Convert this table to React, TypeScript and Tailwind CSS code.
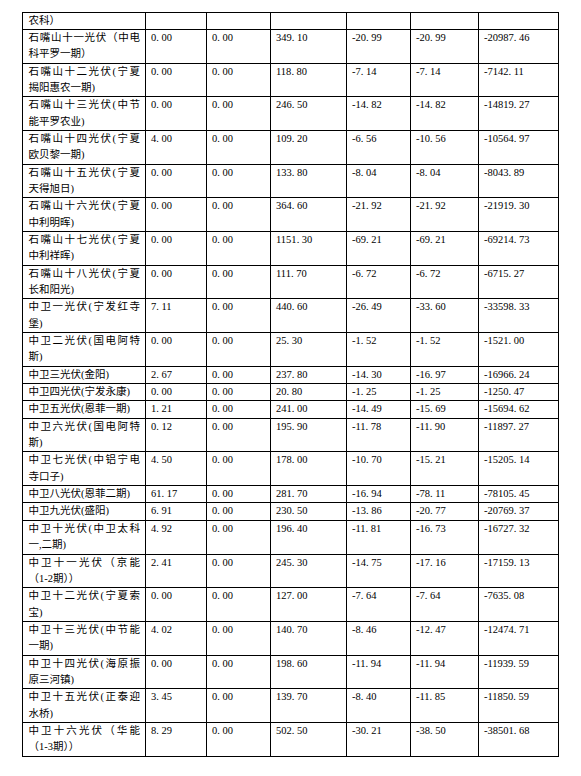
type Row = {
  name: string[]
  values: string[]
}

const rows: Row[] = [
  { name: ['农科）'], values: ['', '', '', '', '', ''] },
  { name: ['石嘴山十一光伏（中电', '科平罗一期）'], values: ['0.00', '0.00', '349.10', '-20.99', '-20.99', '-20987.46'] },
  { name: ['石嘴山十二光伏(宁夏', '揭阳惠农一期)'], values: ['0.00', '0.00', '118.80', '-7.14', '-7.14', '-7142.11'] },
  { name: ['石嘴山十三光伏(中节', '能平罗农业)'], values: ['0.00', '0.00', '246.50', '-14.82', '-14.82', '-14819.27'] },
  { name: ['石嘴山十四光伏(宁夏', '欧贝黎一期)'], values: ['4.00', '0.00', '109.20', '-6.56', '-10.56', '-10564.97'] },
  { name: ['石嘴山十五光伏(宁夏', '天得旭日)'], values: ['0.00', '0.00', '133.80', '-8.04', '-8.04', '-8043.89'] },
  { name: ['石嘴山十六光伏(宁夏', '中利明晖)'], values: ['0.00', '0.00', '364.60', '-21.92', '-21.92', '-21919.30'] },
  { name: ['石嘴山十七光伏(宁夏', '中利祥晖)'], values: ['0.00', '0.00', '1151.30', '-69.21', '-69.21', '-69214.73'] },
  { name: ['石嘴山十八光伏(宁夏', '长和阳光)'], values: ['0.00', '0.00', '111.70', '-6.72', '-6.72', '-6715.27'] },
  { name: ['中卫一光伏(宁发红寺', '堡)'], values: ['7.11', '0.00', '440.60', '-26.49', '-33.60', '-33598.33'] },
  { name: ['中卫二光伏(国电阿特', '斯)'], values: ['0.00', '0.00', '25.30', '-1.52', '-1.52', '-1521.00'] },
  { name: ['中卫三光伏(金阳)'], values: ['2.67', '0.00', '237.80', '-14.30', '-16.97', '-16966.24'] },
  { name: ['中卫四光伏(宁发永康)'], values: ['0.00', '0.00', '20.80', '-1.25', '-1.25', '-1250.47'] },
  { name: ['中卫五光伏(恩菲一期)'], values: ['1.21', '0.00', '241.00', '-14.49', '-15.69', '-15694.62'] },
  { name: ['中卫六光伏(国电阿特', '斯)'], values: ['0.12', '0.00', '195.90', '-11.78', '-11.90', '-11897.27'] },
  { name: ['中卫七光伏(中铝宁电', '寺口子)'], values: ['4.50', '0.00', '178.00', '-10.70', '-15.21', '-15205.14'] },
  { name: ['中卫八光伏(恩菲二期)'], values: ['61.17', '0.00', '281.70', '-16.94', '-78.11', '-78105.45'] },
  { name: ['中卫九光伏(盛阳)'], values: ['6.91', '0.00', '230.50', '-13.86', '-20.77', '-20769.37'] },
  { name: ['中卫十光伏(中卫太科', '一,二期)'], values: ['4.92', '0.00', '196.40', '-11.81', '-16.73', '-16727.32'] },
  { name: ['中卫十一光伏（京能', '（1-2期））'], values: ['2.41', '0.00', '245.30', '-14.75', '-17.16', '-17159.13'] },
  { name: ['中卫十二光伏(宁夏索', '宝)'], values: ['0.00', '0.00', '127.00', '-7.64', '-7.64', '-7635.08'] },
  { name: ['中卫十三光伏(中节能', '一期)'], values: ['4.02', '0.00', '140.70', '-8.46', '-12.47', '-12474.71'] },
  { name: ['中卫十四光伏(海原振', '原三河镇)'], values: ['0.00', '0.00', '198.60', '-11.94', '-11.94', '-11939.59'] },
  { name: ['中卫十五光伏(正泰迎', '水桥)'], values: ['3.45', '0.00', '139.70', '-8.40', '-11.85', '-11850.59'] },
  { name: ['中卫十六光伏（华能', '（1-3期））'], values: ['8.29', '0.00', '502.50', '-30.21', '-38.50', '-38501.68'] },
]

const colWidths = ['w-[123px]', 'w-[61px]', 'w-[64px]', 'w-[76px]', 'w-[64px]', 'w-[68px]', 'w-[80px]']

const cellClass = 'border border-black px-[5px] py-0 align-top leading-[16.35px]'

function Amount({ value }: { value: string }) {
  if (!value) return null
  const [whole, frac] = value.split('.')
  return (
    <span className="whitespace-nowrap">
      {whole}
      <span className="tracking-[2.6px]">.</span>
      {frac}
    </span>
  )
}

function NameCell({ lines }: { lines: string[] }) {
  return (
    <td className={`${cellClass} pl-[5.5px] font-['Liberation_Serif','Noto_Sans_CJK_SC',sans-serif]`}>
      {lines.map((line, i) =>
        i < lines.length - 1 ? (
          <div key={i} className="text-justify [text-align-last:justify] whitespace-nowrap">
            {line}
          </div>
        ) : (
          <div key={i} className="whitespace-nowrap">
            {line}
          </div>
        )
      )}
    </td>
  )
}

export default function App() {
  return (
    <div className="min-h-[776px] w-[581px] bg-white pl-[22px] pt-[11.5px] text-[10.5px] text-black">
      <table className="w-[536px] table-fixed border-collapse">
        <colgroup>
          {colWidths.map((w, i) => (
            <col key={i} className={w} />
          ))}
        </colgroup>
        <tbody>
          {rows.map((row, i) => (
            <tr key={i}>
              <NameCell lines={row.name} />
              {row.values.map((v, j) => (
                <td key={j} className={`${cellClass} font-['Liberation_Serif','Noto_Sans_CJK_SC',serif]`}>
                  <Amount value={v} />
                </td>
              ))}
            </tr>
          ))}
        </tbody>
      </table>
    </div>
  )
}
